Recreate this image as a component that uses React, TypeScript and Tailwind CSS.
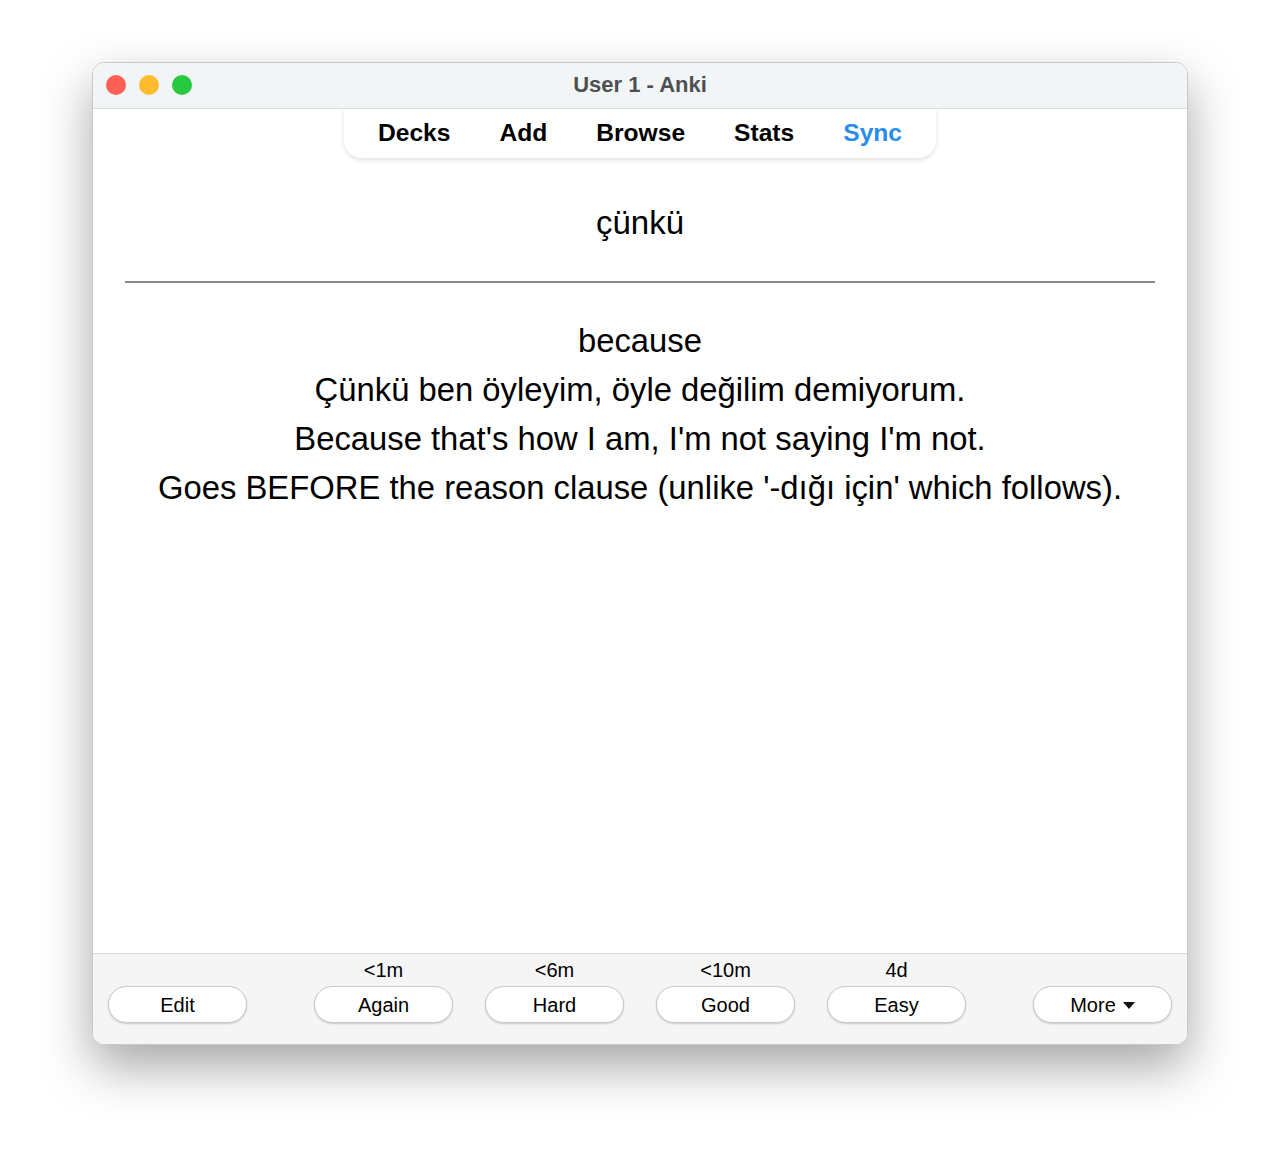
const answers = [
  { label: 'Again', due: '<1m' },
  { label: 'Hard', due: '<6m' },
  { label: 'Good', due: '<10m' },
  { label: 'Easy', due: '4d' },
]

const navItems = ['Decks', 'Add', 'Browse', 'Stats', 'Sync']

const PillButton = ({ children, className = '' }: { children: React.ReactNode; className?: string }) => (
  <button
    className={`flex h-[37px] w-[139px] items-center justify-center rounded-full border border-[#c8c8c8] bg-white text-[20px] text-black shadow-[0_1px_2px_rgba(0,0,0,0.18)] ${className}`}
  >
    {children}
  </button>
)

const App = () => {
  return (
    <div className="flex h-[1166px] w-[1280px] justify-center bg-white pt-[62px] font-['Liberation_Sans',Arial,sans-serif]">
      <div className="flex h-[983px] w-[1096px] flex-col overflow-hidden rounded-[12px] border border-[#c9c9c9] bg-white shadow-[0_22px_50px_rgba(0,0,0,0.35)]">
        {/* title bar */}
        <div className="relative flex h-[46px] shrink-0 items-center justify-center border-b border-[#dcdcdc] bg-[#f1f5f6]">
          <div className="absolute left-[13px] top-[12px] flex gap-[13px]">
            <span className="h-[20px] w-[20px] rounded-full bg-[#fe5f57]" />
            <span className="h-[20px] w-[20px] rounded-full bg-[#febc2e]" />
            <span className="h-[20px] w-[20px] rounded-full bg-[#28c840]" />
          </div>
          <span className="-mt-[3px] text-[22px] font-bold text-[#4d4f52]">User 1 - Anki</span>
        </div>

        {/* main area */}
        <div className="flex flex-1 flex-col items-center">
          <nav className="flex h-[49px] w-[592px] items-center justify-center gap-[49px] rounded-b-[18px] bg-white text-[24.6px] font-bold shadow-[0_2px_5px_rgba(0,0,0,0.12)]">
            {navItems.map(item => (
              <span key={item} className={`-mt-[1px] ${item === 'Sync' ? 'text-[#2a8cea]' : 'text-black'}`}>
                {item}
              </span>
            ))}
          </nav>

          <div className="mt-[45px] text-[33px] leading-[40px] text-black">çünkü</div>

          <hr className="mt-[38px] w-[1030px] border-0 border-t-2 border-[#8a8a8a]" />

          <div className="mt-[33px] flex flex-col items-center text-[32.8px] leading-[49px] text-black">
            <div>because</div>
            <div>Çünkü ben öyleyim, öyle değilim demiyorum.</div>
            <div>Because that's how I am, I'm not saying I'm not.</div>
            <div>Goes BEFORE the reason clause (unlike '-dığı için' which follows).</div>
          </div>
        </div>

        {/* answer bar */}
        <div className="flex h-[91px] shrink-0 items-start border-t border-[#d6d6d6] bg-[#f5f5f5] px-[15px]">
          <div className="mt-[32px]">
            <PillButton>Edit</PillButton>
          </div>
          <div className="ml-[67px] flex gap-[32px]">
            {answers.map(a => (
              <div key={a.label} className="flex flex-col items-center">
                <span className="mt-[4px] h-[28px] text-[20px] leading-[24px] text-black">{a.due}</span>
                <PillButton>{a.label}</PillButton>
              </div>
            ))}
          </div>
          <div className="ml-auto mt-[32px]">
            <PillButton>
              More
              <svg width="12" height="7" viewBox="0 0 12 7" className="ml-[7px] mt-[2px]">
                <path d="M0 0h12L6 7z" fill="#111" />
              </svg>
            </PillButton>
          </div>
        </div>
      </div>
    </div>
  )
}

export default App
